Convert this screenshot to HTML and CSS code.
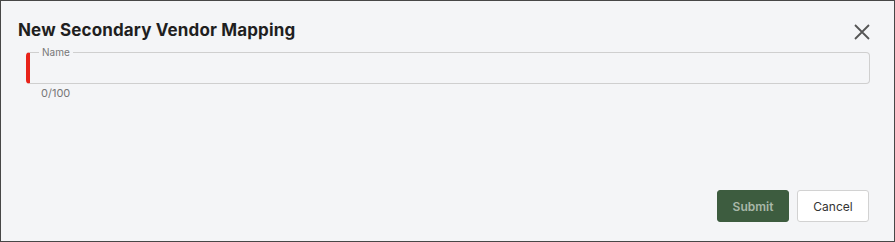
FILE: index.html
```html
<!DOCTYPE html>
<html lang="en">
<head>
    <meta charset="UTF-8">
    <title>New Secondary Vendor Mapping</title>
    <link rel="stylesheet" href="styles.css">
</head>
<body>
    <div class="dialog">
        <!-- Header -->
        <div class="dialog-header">
            <h2>New Secondary Vendor Mapping</h2>
            <button class="close-btn" aria-label="Close">
                <svg width="16" height="16" viewBox="0 0 16 16">
                    <path d="M1 1 L15 15 M15 1 L1 15" stroke="#555" stroke-width="1.8" fill="none"/>
                </svg>
            </button>
        </div>

        <!-- Form -->
        <div class="dialog-body">
            <fieldset class="field">
                <legend>Name</legend>
                <input type="text" maxlength="100">
            </fieldset>
            <div class="counter">0/100</div>
        </div>

        <!-- Actions -->
        <div class="dialog-actions">
            <button class="btn btn-primary">Submit</button>
            <button class="btn btn-secondary">Cancel</button>
        </div>
    </div>
</body>
</html>
```

FILE: styles.css
```css
* {
    margin: 0;
    padding: 0;
    box-sizing: border-box;
    font-family: 'Inter', 'Liberation Sans', sans-serif;
}

body {
    background: #f4f5f7;
}

.dialog {
    width: 895px;
    height: 242px;
    border: 1px solid #474747;
    background: #f4f5f7;
    display: flex;
    flex-direction: column;
}

/* Header */
.dialog-header {
    display: flex;
    justify-content: space-between;
    align-items: center;
    padding: 16px 24px 0 17px;
    height: 42px;
}

.dialog-header h2 {
    font-size: 17px;
    font-weight: 700;
    color: #1f1f1f;
    letter-spacing: 0.15px;
}

.close-btn {
    border: none;
    background: none;
    cursor: pointer;
    display: flex;
    margin-top: 3px;
}

/* Form */
.dialog-body {
    padding: 4px 24px 0 25px;
}

.field {
    height: 37px;
    border: 1px solid #cfcfcf;
    border-left: 4px solid #e8231a;
    border-radius: 4px;
    padding: 0 8px;
}

.field legend {
    font-size: 10px;
    color: #777;
    padding: 0 3px;
    margin-left: 1px;
    line-height: 10px;
}

.field input {
    width: 100%;
    border: none;
    background: transparent;
    outline: none;
    font-size: 13px;
    height: 25px;
}

.counter {
    font-size: 11px;
    color: #777;
    padding-left: 15px;
    margin-top: 2px;
}

/* Actions */
.dialog-actions {
    margin-top: auto;
    display: flex;
    justify-content: flex-end;
    gap: 8px;
    padding: 0 25px 19px 0;
}

.btn {
    width: 72px;
    height: 32px;
    border-radius: 3px;
    font-size: 12px;
    cursor: pointer;
}

.btn-primary {
    background: #3d5c3f;
    border: 1px solid #3d5c3f;
    color: #a9b8a9;
    font-weight: 600;
}

.btn-secondary {
    background: #fff;
    border: 1px solid #d2d2d2;
    color: #333;
}
```
